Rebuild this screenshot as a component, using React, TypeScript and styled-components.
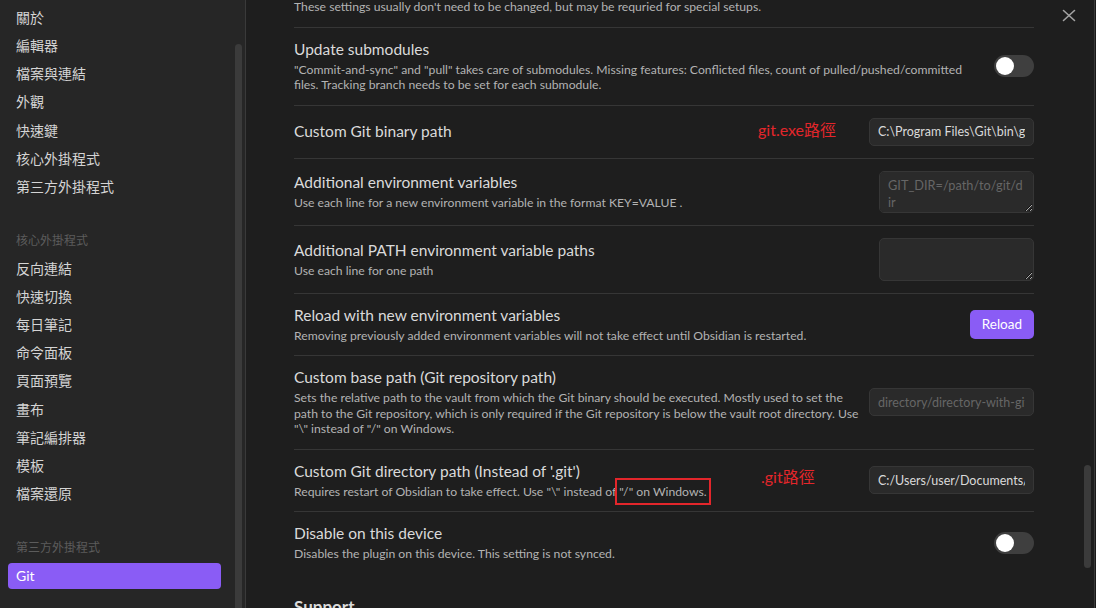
import React from 'react';
import styled, { createGlobalStyle } from 'styled-components';

const GlobalStyle = createGlobalStyle`
  html, body { margin: 0; padding: 0; background: #1e1e1e; overflow: hidden; }
  body { font-family: Lato, "Noto Sans CJK TC", sans-serif; color-scheme: dark; }
  * { box-sizing: border-box; }
`;

const Shell = styled.div`
  display: flex;
  width: 1096px;
  height: 608px;
  padding-right: 1px;
  overflow: hidden;
  background: #1a1a1a;
`;

const Sidebar = styled.aside`
  flex: 0 0 246px;
  display: flex;
  background: #262626;
  border-right: 1px solid #3a3a3a;
`;

const Nav = styled.nav`
  flex: 1;
  min-width: 0;
  padding: 5px 14px 0 8px;
`;

const NavItem = styled.div<{ $active?: boolean }>`
  height: 26px;
  line-height: 26px;
  margin-bottom: 2.15px;
  padding-left: 8px;
  border-radius: 4px;
  font-size: 14px;
  color: ${p => (p.$active ? '#ffffff' : '#d4d4d4')};
  background: ${p => (p.$active ? '#8a5cf5' : 'transparent')};
  white-space: nowrap;
`;

const NavHeader = styled.div`
  height: 26px;
  line-height: 26px;
  margin-top: 28.5px;
  margin-bottom: 1.5px;
  padding-left: 8px;
  font-size: 12px;
  color: #5c5c5c;
`;

const ScrollTrack = styled.div<{ $top: number }>`
  flex: 0 0 10px;
  display: flex;
  flex-direction: column;
  padding-top: ${p => p.$top}px;
`;

const ScrollThumb = styled.div<{ $height?: number; $round?: boolean }>`
  width: 7px;
  height: ${p => (p.$height ? `${p.$height}px` : '100%')};
  flex: ${p => (p.$height ? '0 0 auto' : '1')};
  background: #3b3b3b;
  border-radius: ${p => (p.$round ? '4px' : '4px 4px 0 0')};
`;

const Content = styled.main`
  flex: 1;
  min-width: 0;
  position: relative;
  display: flex;
  background: #1e1e1e;
  border-right: 1px solid #3a3a3a;
`;

const Column = styled.div`
  flex: 0 0 740px;
  width: 740px;
  min-width: 0;
  margin-left: 48px;
  margin-top: -1px;
`;

const Spacer = styled.div`
  flex: 1;
`;

const CloseButton = styled.button`
  position: absolute;
  top: 4px;
  right: 13px;
  width: 24px;
  height: 24px;
  padding: 0;
  border: none;
  background: transparent;
  display: flex;
  align-items: center;
  justify-content: center;
`;

const IntroDesc = styled.div`
  font-size: 12.2px;
  line-height: 16px;
  color: #b3b3b3;
  padding-bottom: 11.5px;
`;

const SettingItem = styled.div`
  position: relative;
  display: flex;
  align-items: center;
  padding: 12px 0;
  border-top: 1px solid #363636;
`;

const Info = styled.div`
  flex: 1 1 auto;
  min-width: 0;
  margin-right: 16px;
`;

const Name = styled.div`
  font-size: 15.5px;
  line-height: 19px;
  color: #dadada;
`;

const Description = styled.div`
  font-size: 12.2px;
  line-height: 15.5px;
  color: #b3b3b3;
  padding-top: 3px;
`;

const Line = styled.span`
  display: block;
  white-space: nowrap;
`;

const Control = styled.div`
  flex: 0 0 auto;
  display: flex;
  justify-content: flex-end;
  align-items: center;
`;

const TextInput = styled.input`
  width: 165px;
  height: 28px;
  padding: 0 8px;
  background: #2a2a2a;
  border: 1px solid #363636;
  border-radius: 5px;
  color: #dadada;
  font-family: inherit;
  font-size: 12.5px;
  outline: none;
  &::placeholder { color: #666666; }
`;

const TextArea = styled.textarea`
  width: 155px;
  height: 42.5px;
  padding: 5px 8px;
  background: #2a2a2a;
  border: 1px solid #363636;
  border-radius: 5px;
  color: #dadada;
  font-family: inherit;
  font-size: 12.75px;
  line-height: 17px;
  word-break: break-all;
  outline: none;
  &::placeholder { color: #666666; }
`;

const Toggle = styled.div<{ $on?: boolean }>`
  width: 40px;
  height: 22px;
  padding: 0 2px;
  display: flex;
  align-items: center;
  justify-content: ${p => (p.$on ? 'flex-end' : 'flex-start')};
  border-radius: 11px;
  background: ${p => (p.$on ? '#8a5cf5' : '#3f3f3f')};
`;

const Knob = styled.div`
  width: 18px;
  height: 18px;
  border-radius: 50%;
  background: #ffffff;
`;

const AccentButton = styled.button`
  height: 29.5px;
  padding: 0 12px;
  border: none;
  border-radius: 5px;
  background: #8a5cf5;
  color: #ffffff;
  font-family: inherit;
  font-size: 13.5px;
`;

const Annotation = styled.div<{ $left: number; $top: number }>`
  position: absolute;
  left: ${p => p.$left}px;
  top: ${p => p.$top}px;
  font-size: 16px;
  line-height: 20px;
  color: #e3262b;
  white-space: nowrap;
`;

const Boxed = styled.span`
  padding: 2px 0;
  outline: 2px solid #e3262b;
  outline-offset: 2px;
`;

const Heading = styled.div`
  margin-top: 21px;
  font-size: 17px;
  font-weight: 700;
  line-height: 24px;
  color: #dadada;
`;

const generalItems = ['關於', '編輯器', '檔案與連結', '外觀', '快速鍵', '核心外掛程式', '第三方外掛程式'];
const coreItems = ['反向連結', '快速切換', '每日筆記', '命令面板', '頁面預覽', '畫布', '筆記編排器', '模板', '檔案還原'];

const CloseIcon = () => (
  <svg width="24" height="24" viewBox="0 0 24 24" fill="none" stroke="#a3a3a3" strokeWidth="1.6" strokeLinecap="round">
    <path d="M6.5 6.5l11 10" />
    <path d="M17.5 6.5l-11 10" />
  </svg>
);

export default function App() {
  return (
    <>
      <GlobalStyle />
      <Shell>
        <Sidebar>
          <Nav>
            {generalItems.map(t => (
              <NavItem key={t}>{t}</NavItem>
            ))}
            <NavHeader>核心外掛程式</NavHeader>
            {coreItems.map(t => (
              <NavItem key={t}>{t}</NavItem>
            ))}
            <NavHeader>第三方外掛程式</NavHeader>
            <NavItem $active>Git</NavItem>
          </Nav>
          <ScrollTrack $top={44}>
            <ScrollThumb />
          </ScrollTrack>
        </Sidebar>

        <Content>
          <Column>
            <IntroDesc>These settings usually don't need to be changed, but may be requried for special setups.</IntroDesc>

            <SettingItem>
              <Info>
                <Name>Update submodules</Name>
                <Description>
                  <Line>"Commit-and-sync" and "pull" takes care of submodules. Missing features: Conflicted files, count of pulled/pushed/committed</Line>
                  <Line>files. Tracking branch needs to be set for each submodule.</Line>
                </Description>
              </Info>
              <Control>
                <Toggle><Knob /></Toggle>
              </Control>
            </SettingItem>

            <SettingItem>
              <Info>
                <Name>Custom Git binary path</Name>
              </Info>
              <Annotation $left={464} $top={14}>git.exe路徑</Annotation>
              <Control>
                <TextInput defaultValue={'C:\\Program Files\\Git\\bin\\git.exe'} />
              </Control>
            </SettingItem>

            <SettingItem>
              <Info>
                <Name>Additional environment variables</Name>
                <Description>Use each line for a new environment variable in the format KEY=VALUE .</Description>
              </Info>
              <Control>
                <TextArea placeholder="GIT_DIR=/path/to/git/dir" />
              </Control>
            </SettingItem>

            <SettingItem>
              <Info>
                <Name>Additional PATH environment variable paths</Name>
                <Description>Use each line for one path</Description>
              </Info>
              <Control>
                <TextArea />
              </Control>
            </SettingItem>

            <SettingItem>
              <Info>
                <Name>Reload with new environment variables</Name>
                <Description>Removing previously added environment variables will not take effect until Obsidian is restarted.</Description>
              </Info>
              <Control>
                <AccentButton>Reload</AccentButton>
              </Control>
            </SettingItem>

            <SettingItem>
              <Info>
                <Name>Custom base path (Git repository path)</Name>
                <Description>
                  <Line>Sets the relative path to the vault from which the Git binary should be executed. Mostly used to set the</Line>
                  <Line>path to the Git repository, which is only required if the Git repository is below the vault root directory. Use</Line>
                  <Line>"\" instead of "/" on Windows.</Line>
                </Description>
              </Info>
              <Control>
                <TextInput placeholder="directory/directory-with-git" />
              </Control>
            </SettingItem>

            <SettingItem>
              <Info>
                <Name>Custom Git directory path (Instead of '.git')</Name>
                <Description>
                  Requires restart of Obsidian to take effect. Use "\" instead of <Boxed>"/" on Windows.</Boxed>
                </Description>
              </Info>
              <Annotation $left={467} $top={17}>.git路徑</Annotation>
              <Control>
                <TextInput defaultValue="C:/Users/user/Documents/notes/.git" />
              </Control>
            </SettingItem>

            <SettingItem>
              <Info>
                <Name>Disable on this device</Name>
                <Description>Disables the plugin on this device. This setting is not synced.</Description>
              </Info>
              <Control>
                <Toggle><Knob /></Toggle>
              </Control>
            </SettingItem>

            <Heading>Support</Heading>
          </Column>
          <Spacer />
          <ScrollTrack $top={465}>
            <ScrollThumb $height={103} $round />
          </ScrollTrack>
          <CloseButton aria-label="Close">
            <CloseIcon />
          </CloseButton>
        </Content>
      </Shell>
    </>
  );
}
